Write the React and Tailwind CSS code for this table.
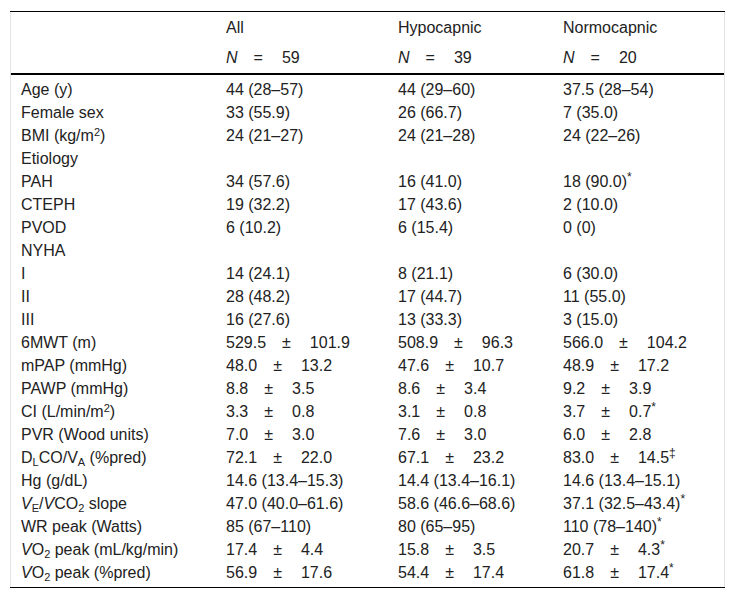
import React from 'react'

// summary table: all patients vs hypocapnic vs normocapnic

const Pm = ({ a, b, mark }) => (
  <>
    {a}
    <span className="ml-[16px]">±</span>
    <span className="ml-[19px]">{b}</span>
    {mark && <sup className="text-[12px]">{mark}</sup>}
  </>
)

const Star = () => <sup className="text-[12px]">*</sup>

const rows = [
  ['Age (y)', '44 (28–57)', '44 (29–60)', '37.5 (28–54)'],
  ['Female sex', '33 (55.9)', '26 (66.7)', '7 (35.0)'],
  [<>BMI (kg/m<sup className="text-[11px]">2</sup>)</>, '24 (21–27)', '24 (21–28)', '24 (22–26)'],
  ['Etiology'],
  ['PAH', '34 (57.6)', '16 (41.0)', <>18 (90.0)<Star /></>],
  ['CTEPH', '19 (32.2)', '17 (43.6)', '2 (10.0)'],
  ['PVOD', '6 (10.2)', '6 (15.4)', '0 (0)'],
  ['NYHA'],
  ['I', '14 (24.1)', '8 (21.1)', '6 (30.0)'],
  ['II', '28 (48.2)', '17 (44.7)', '11 (55.0)'],
  ['III', '16 (27.6)', '13 (33.3)', '3 (15.0)'],
  ['6MWT (m)', <Pm a="529.5" b="101.9" />, <Pm a="508.9" b="96.3" />, <Pm a="566.0" b="104.2" />],
  ['mPAP (mmHg)', <Pm a="48.0" b="13.2" />, <Pm a="47.6" b="10.7" />, <Pm a="48.9" b="17.2" />],
  ['PAWP (mmHg)', <Pm a="8.8" b="3.5" />, <Pm a="8.6" b="3.4" />, <Pm a="9.2" b="3.9" />],
  [<>CI (L/min/m<sup className="text-[11px]">2</sup>)</>, <Pm a="3.3" b="0.8" />, <Pm a="3.1" b="0.8" />, <Pm a="3.7" b="0.7" mark="*" />],
  ['PVR (Wood units)', <Pm a="7.0" b="3.0" />, <Pm a="7.6" b="3.0" />, <Pm a="6.0" b="2.8" />],
  [
    <>D<sub className="text-[11px]">L</sub>CO/V<sub className="text-[11px]">A</sub> (%pred)</>,
    <Pm a="72.1" b="22.0" />, <Pm a="67.1" b="23.2" />, <Pm a="83.0" b="14.5" mark="‡" />,
  ],
  ['Hg (g/dL)', '14.6 (13.4–15.3)', '14.4 (13.4–16.1)', '14.6 (13.4–15.1)'],
  [
    <><i>V</i><sub className="text-[11px]">E</sub>/<i>V</i>CO<sub className="text-[11px]">2</sub> slope</>,
    '47.0 (40.0–61.6)', '58.6 (46.6–68.6)', <>37.1 (32.5–43.4)<Star /></>,
  ],
  ['WR peak (Watts)', '85 (67–110)', '80 (65–95)', <>110 (78–140)<Star /></>],
  [
    <><i>V</i>O<sub className="text-[11px]">2</sub> peak (mL/kg/min)</>,
    <Pm a="17.4" b="4.4" />, <Pm a="15.8" b="3.5" />, <Pm a="20.7" b="4.3" mark="*" />,
  ],
  [
    <><i>V</i>O<sub className="text-[11px]">2</sub> peak (%pred)</>,
    <Pm a="56.9" b="17.6" />, <Pm a="54.4" b="17.4" />, <Pm a="61.8" b="17.4" mark="*" />,
  ],
]

const cols = 'grid grid-cols-[205px_172px_165px_172px]'

const N = ({ n }) => (
  <>
    <i>N</i>
    <span className="ml-[16px]">=</span>
    <span className="ml-[19px]">{n}</span>
  </>
)

export default function App() {
  return (
    <div className="min-h-screen bg-white pt-[11px] text-[16px] text-[#222] font-['Liberation_Sans',Arial,sans-serif]">
      <div className="ml-[10px] w-[715px] border-t border-b border-black">
        <div className="border-x border-[#e4e4e4]">

          {/* Header */}
          <div className="pt-[1px] border-b-2 border-black">
            <div className={`${cols} h-[30px] items-center`}>
              <div />
              <div className="pl-[10px]">All</div>
              <div className="pl-[10px]">Hypocapnic</div>
              <div className="pl-[10px]">Normocapnic</div>
            </div>
            <div className={`${cols} h-[30px] items-center`}>
              <div />
              <div className="pl-[10px]"><N n="59" /></div>
              <div className="pl-[10px]"><N n="39" /></div>
              <div className="pl-[10px]"><N n="20" /></div>
            </div>
          </div>

          {/* Body */}
          <div className="py-[3px]">
            {rows.map((r, i) => (
              <div key={i} className={`${cols} h-[23px] items-center leading-[23px] whitespace-nowrap`}>
                {[0, 1, 2, 3].map(c => (
                  <div key={c} className="pl-[10px]">{r[c]}</div>
                ))}
              </div>
            ))}
          </div>
        </div>
      </div>
    </div>
  )
}
